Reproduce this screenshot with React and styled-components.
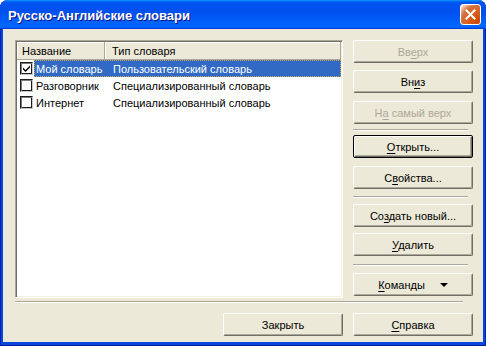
import React from "react";
import styled, { createGlobalStyle } from "styled-components";

const GlobalStyle = createGlobalStyle`
  html, body {
    margin: 0;
    padding: 0;
    background: #ffffff;
  }
  body {
    font-family: "Liberation Sans", Arial, sans-serif;
    font-size: 11px;
    color: #000;
  }
`;

const Window = styled.div`
  width: 486px;
  height: 346px;
  display: flex;
  flex-direction: column;
  background: #0846dd;
  border-radius: 8px 8px 0 0;
  overflow: hidden;
  box-shadow: inset 1px 0 #0022b0, inset -1px 0 #0022b0, inset 0 -1px #001a94;
`;

const TitleBar = styled.div`
  height: 29px;
  flex: none;
  display: flex;
  align-items: center;
  justify-content: space-between;
  padding: 0 5px 0 8px;
  background: linear-gradient(
    180deg,
    #0997ff,
    #0053ee 8%,
    #0050ee 40%,
    #0066ff 88%,
    #0066ff 93%,
    #005bff 95%,
    #003dd7 96%,
    #003dd7
  );
`;

const Title = styled.span`
  font-family: "Liberation Sans", Arial, sans-serif;
  font-weight: bold;
  font-size: 13px;
  color: #fff;
  text-shadow: 1px 1px #0f1089;
  padding-top: 1px;
`;

const CloseButton = styled.div`
  width: 21px;
  height: 21px;
  box-sizing: border-box;
  border: 1px solid #fff;
  border-radius: 3px;
  display: flex;
  align-items: center;
  justify-content: center;
  background: radial-gradient(
    circle at 90% 90%,
    #cc4600 0,
    #dc6527 55%,
    #cd7546 70%,
    #ffccb2 90%,
    #fff 100%
  );
`;

const Body = styled.div`
  flex: 1;
  margin: 0 3px 4px 3px;
  background: #ece9d8;
  padding: 11px 10px 6px 12px;
  display: flex;
  flex-direction: column;
`;

const MainRow = styled.div`
  display: flex;
  gap: 10px;
  height: 258px;
`;

const ListBox = styled.div`
  width: 328px;
  box-sizing: border-box;
  background: #fff;
  border: 1px solid;
  border-color: #aca899 #fff #fff #aca899;
  box-shadow: inset 1px 1px #716f64, inset -1px -1px #f1efe2;
  padding: 1px;
`;

const Header = styled.div`
  display: flex;
  height: 18px;
`;

const HeaderCell = styled.div`
  box-sizing: border-box;
  width: ${(p) => (p.$width ? `${p.$width}px` : "auto")};
  flex: ${(p) => (p.$width ? "none" : "1")};
  display: flex;
  align-items: center;
  padding-left: ${(p) => p.$pad}px;
  background: #ece9d8;
  border-right: 1px solid #aca899;
  border-bottom: 1px solid #aca899;
  box-shadow: inset 1px 1px #fff;
  white-space: nowrap;
`;

const Row = styled.div`
  display: flex;
  align-items: center;
  height: 17px;
`;

const CheckBox = styled.div`
  width: 13px;
  height: 13px;
  box-sizing: border-box;
  margin-left: 3px;
  border: 1px solid;
  border-color: #1c1c1c #c8c8c8 #c8c8c8 #1c1c1c;
  box-shadow: inset 1px 1px #7a7a7a, inset -1px -1px #1c1c1c;
  background: #fff;
  display: flex;
  align-items: center;
  justify-content: center;
  flex: none;
`;

const RowBody = styled.div`
  flex: 1;
  height: 17px;
  margin-left: 1px;
  display: flex;
  align-items: center;
  box-sizing: border-box;
  background: ${(p) => (p.$selected ? "#316ac5" : "transparent")};
  color: ${(p) => (p.$selected ? "#fff" : "#000")};
  outline: ${(p) => (p.$selected ? "1px dotted #c9a65a" : "none")};
  outline-offset: -1px;
`;

const Cell = styled.div`
  box-sizing: border-box;
  width: ${(p) => (p.$width ? `${p.$width}px` : "auto")};
  flex: ${(p) => (p.$width ? "none" : "1")};
  padding-left: ${(p) => p.$pad}px;
  white-space: nowrap;
`;

const ButtonColumn = styled.div`
  width: 120px;
  display: flex;
  flex-direction: column;
`;

const ButtonGroup = styled.div`
  display: flex;
  flex-direction: column;
  gap: ${(p) => p.$gap}px;
`;

const Button = styled.button`
  width: 120px;
  height: 23px;
  box-sizing: border-box;
  margin-top: ${(p) => p.$mt || 0}px;
  font-family: "Liberation Sans", Arial, sans-serif;
  font-size: 11px;
  color: #000;
  background: #ece9d8;
  border-radius: 2px;
  display: flex;
  align-items: center;
  justify-content: center;
  padding: 0;
  cursor: default;
  border: 1px solid;
  border-color: ${(p) =>
    p.$default ? "#000" : "#fff #716f64 #716f64 #fff"};
  box-shadow: ${(p) =>
    p.$default
      ? "inset 1px 1px #fff, inset -1px -1px #716f64, inset -2px -2px #aca899"
      : "inset -1px -1px #aca899"};

  &:disabled {
    color: #aca899;
  }

  u {
    text-underline-offset: 2px;
  }
`;

const Label = styled.span`
  white-space: nowrap;
`;

const Separator = styled.div`
  height: 0;
  border-top: 1px solid #aca899;
  border-bottom: 1px solid #fff;
  margin: ${(p) => p.$top}px ${(p) => p.$right}px ${(p) => p.$bottom}px 0;
`;

const Triangle = styled.span`
  width: 0;
  height: 0;
  margin-left: 15px;
  margin-top: 1px;
  border-left: 4px solid transparent;
  border-right: 4px solid transparent;
  border-top: 4px solid #000;
`;

const BottomRow = styled.div`
  display: flex;
  justify-content: flex-end;
  gap: 10px;
  margin-top: 10px;
`;

const dictionaries = [
  { name: "Мой словарь", type: "Пользовательский словарь", checked: true, selected: true },
  { name: "Разговорник", type: "Специализированный словарь" },
  { name: "Интернет", type: "Специализированный словарь" },
];

function CheckMark() {
  return (
    <svg width="9" height="9" viewBox="0 0 9 9">
      <path d="M1 3.5 L3.5 6 L8 1.5 L8 3.5 L3.5 8 L1 5.5 Z" fill="#000" />
    </svg>
  );
}

export default function App() {
  return (
    <>
      <GlobalStyle />
      <Window>
        <TitleBar>
          <Title>Русско-Английские словари</Title>
          <CloseButton>
            <svg width="13" height="13" viewBox="0 0 13 13">
              <path
                d="M2.5 2.5 L10.5 10.5 M10.5 2.5 L2.5 10.5"
                stroke="#fff"
                strokeWidth="2"
                strokeLinecap="square"
              />
            </svg>
          </CloseButton>
        </TitleBar>
        <Body>
          <MainRow>
            <ListBox>
              <Header>
                <HeaderCell $width={88} $pad={5}>Название</HeaderCell>
                <HeaderCell $pad={7}>Тип словаря</HeaderCell>
              </Header>
              {dictionaries.map((d) => (
                <Row key={d.name}>
                  <CheckBox>{d.checked && <CheckMark />}</CheckBox>
                  <RowBody $selected={d.selected}>
                    <Cell $width={71} $pad={2}>{d.name}</Cell>
                    <Cell $pad={8}>{d.type}</Cell>
                  </RowBody>
                </Row>
              ))}
            </ListBox>
            <ButtonColumn>
              <ButtonGroup $gap={7}>
                <Button disabled><Label>Вв<u>е</u>рх</Label></Button>
                <Button><Label>Вн<u>и</u>з</Label></Button>
                <Button disabled $mt={1}><Label>Н<u>а</u> самый верх</Label></Button>
              </ButtonGroup>
              <Separator $top={5} $bottom={4} $right={5} />
              <ButtonGroup $gap={8}>
                <Button $default><Label><u>О</u>ткрыть...</Label></Button>
                <Button><Label>С<u>в</u>ойства...</Label></Button>
              </ButtonGroup>
              <Separator $top={7} $bottom={6} $right={5} />
              <ButtonGroup $gap={6}>
                <Button><Label>Со<u>з</u>дать новый...</Label></Button>
                <Button><Label><u>У</u>далить</Label></Button>
              </ButtonGroup>
              <Separator $top={8} $bottom={7} $right={5} />
              <Button>
                <Label><u>К</u>оманды</Label>
                <Triangle />
              </Button>
            </ButtonColumn>
          </MainRow>
          <Separator $top={3} $bottom={0} $right={10} />
          <BottomRow>
            <Button><Label>Закрыть</Label></Button>
            <Button><Label><u>С</u>правка</Label></Button>
          </BottomRow>
        </Body>
      </Window>
    </>
  );
}
